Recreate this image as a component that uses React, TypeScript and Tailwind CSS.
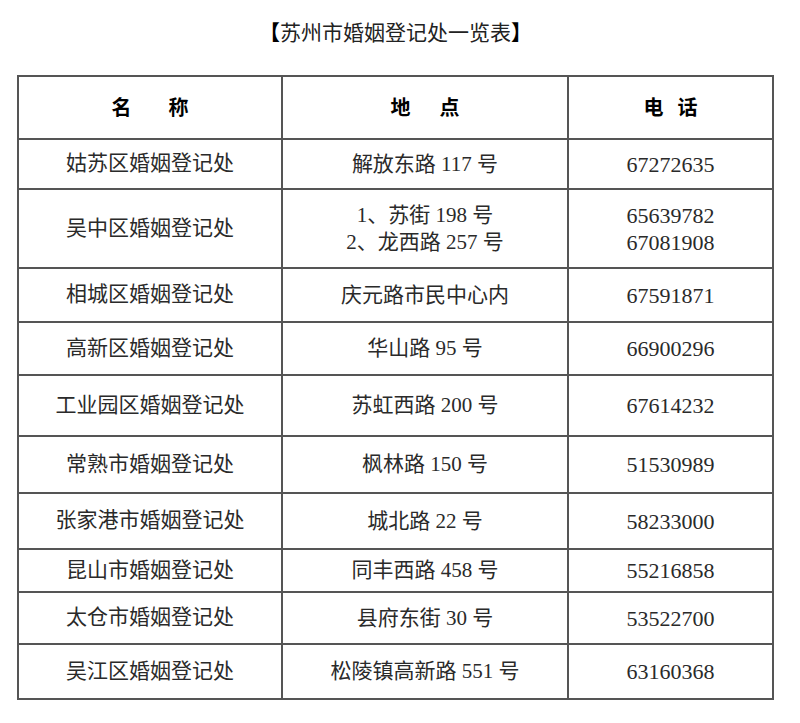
import React from 'react';

type Office = {
  name: string;
  address: string[];
  phone: string[];
  height: string;
};

// row heights follow the source document, which is not regular
const OFFICES: Office[] = [
  { name: '姑苏区婚姻登记处', address: ['解放东路 117 号'], phone: ['67272635'], height: 'h-[50px]' },
  {
    name: '吴中区婚姻登记处',
    address: ['1、苏街 198 号', '2、龙西路 257 号'],
    phone: ['65639782', '67081908'],
    height: 'h-[79px]',
  },
  { name: '相城区婚姻登记处', address: ['庆元路市民中心内'], phone: ['67591871'], height: 'h-[54px]' },
  { name: '高新区婚姻登记处', address: ['华山路 95 号'], phone: ['66900296'], height: 'h-[53px]' },
  { name: '工业园区婚姻登记处', address: ['苏虹西路 200 号'], phone: ['67614232'], height: 'h-[61px]' },
  { name: '常熟市婚姻登记处', address: ['枫林路 150 号'], phone: ['51530989'], height: 'h-[57px]' },
  { name: '张家港市婚姻登记处', address: ['城北路 22 号'], phone: ['58233000'], height: 'h-[56px]' },
  { name: '昆山市婚姻登记处', address: ['同丰西路 458 号'], phone: ['55216858'], height: 'h-[43px]' },
  { name: '太仓市婚姻登记处', address: ['县府东街 30 号'], phone: ['53522700'], height: 'h-[52px]' },
  { name: '吴江区婚姻登记处', address: ['松陵镇高新路 551 号'], phone: ['63160368'], height: 'h-[55px]' },
];

const cols = 'grid grid-cols-[262px_286px_205px]';

function Lines({ lines }: { lines: string[] }) {
  return (
    <div className="flex flex-col items-center leading-[27px]">
      {lines.map((l) => (
        <span key={l} className="whitespace-pre">
          {l}
        </span>
      ))}
    </div>
  );
}

export default function App() {
  return (
    <div
      className="w-[800px] h-[723px] bg-white text-[#2a2a2a]"
      style={{ fontFamily: '"Liberation Serif", "Noto Sans CJK SC", serif' }}
    >
      <div className="w-[757px] ml-[17px] pt-[17px]">
        <h1
          className="h-[28px] text-center text-[21px] leading-[28px] font-normal text-[#222]"
          style={{ fontFamily: '"Noto Sans CJK SC", sans-serif' }}
        >
          <span className="font-bold text-black">【</span>苏州市婚姻登记处一览表<span className="font-bold text-black">】</span>
        </h1>

        <div className="mt-[30px] border-2 border-[#555]">
          <div className={`${cols} h-[61px] text-[20px] font-bold text-black`}>
            <div className="flex items-center justify-center gap-[37px]">
              <span>名</span>
              <span>称</span>
            </div>
            <div className="flex items-center justify-center gap-[29px] border-l-2 border-[#555]">
              <span>地</span>
              <span>点</span>
            </div>
            <div className="flex items-center justify-center gap-[14px] border-l-2 border-[#555]">
              <span>电</span>
              <span>话</span>
            </div>
          </div>

          {OFFICES.map((o) => (
            <div key={o.name} className={`${cols} ${o.height} border-t-2 border-[#555] text-[21px]`}>
              <div className="flex items-center justify-center">{o.name}</div>
              <div className="flex items-center justify-center border-l-2 border-[#555]">
                <Lines lines={o.address} />
              </div>
              <div className="flex items-center justify-center border-l-2 border-[#555] text-[22px]">
                <Lines lines={o.phone} />
              </div>
            </div>
          ))}
        </div>
      </div>
    </div>
  );
}
